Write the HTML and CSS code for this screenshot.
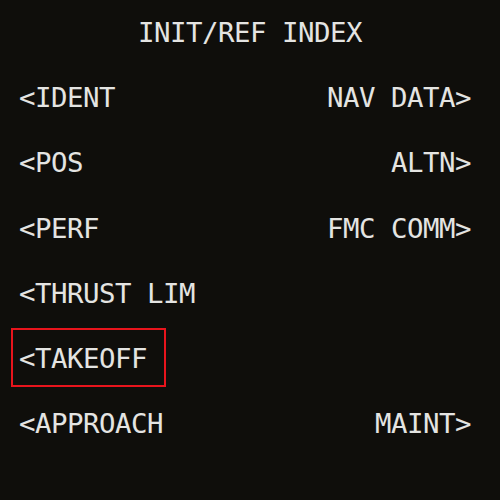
FILE: index.html
```html
<!DOCTYPE html>
<html>
<head>
<meta charset="utf-8">
<link rel="stylesheet" href="styles.css">
</head>
<body>
<div class="cdu">
  <div class="title">INIT/REF INDEX</div>
  <div class="row"><span class="lsk">&lt;IDENT</span><span class="rsk">NAV DATA&gt;</span></div>
  <div class="row"><span class="lsk">&lt;POS</span><span class="rsk">ALTN&gt;</span></div>
  <div class="row"><span class="lsk">&lt;PERF</span><span class="rsk">FMC COMM&gt;</span></div>
  <div class="row"><span class="lsk">&lt;THRUST LIM</span><span class="rsk"></span></div>
  <div class="row"><span class="lsk selected">&lt;TAKEOFF</span><span class="rsk"></span></div>
  <div class="row"><span class="lsk">&lt;APPROACH</span><span class="rsk">MAINT&gt;</span></div>
</div>
</body>
</html>
```
FILE: styles.css
```css
html, body {
  margin: 0;
  padding: 0;
  background: #0f0e0b;
}
.cdu {
  width: 500px;
  height: 500px;
  box-sizing: border-box;
  padding: 1px 29px 0 19px;
  background: #0f0e0b;
  color: #e4e4e2;
  font-family: "DejaVu Sans Mono", monospace;
  font-size: 27.4px;
  letter-spacing: -0.5px;
}
.title {
  height: 64px;
  line-height: 64px;
  text-align: center;
  white-space: pre;
  padding-left: 10px;
}
.row {
  height: 65.3px;
  line-height: 65.3px;
  display: flex;
  justify-content: space-between;
  white-space: pre;
}
.selected {
  position: relative;
}
.selected::after {
  content: "";
  position: absolute;
  left: -8px;
  top: 2px;
  width: 151px;
  height: 55px;
  border: 2px solid #e8141c;
}
```
